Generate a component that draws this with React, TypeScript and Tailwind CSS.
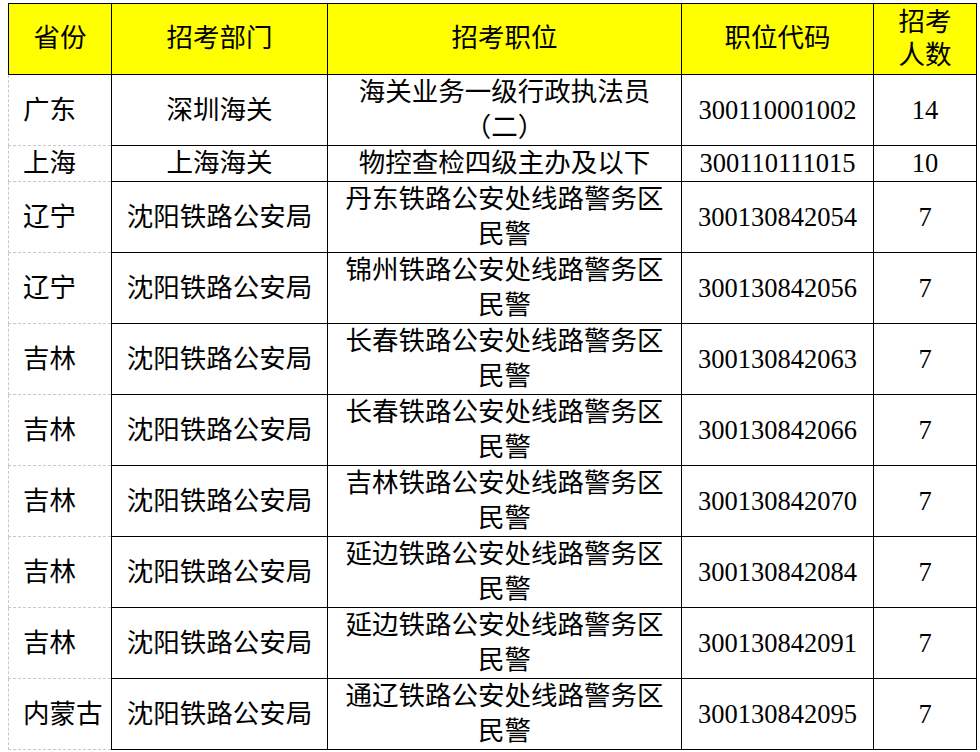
const rows = [
  { prov: '广东', dept: '深圳海关', pos: ['海关业务一级行政执法员', '（二）'], code: '300110001002', num: '14', h: 'h-[71px]' },
  { prov: '上海', dept: '上海海关', pos: ['物控查检四级主办及以下'], code: '300110111015', num: '10', h: 'h-[36px]' },
  { prov: '辽宁', dept: '沈阳铁路公安局', pos: ['丹东铁路公安处线路警务区', '民警'], code: '300130842054', num: '7', h: 'h-[71px]' },
  { prov: '辽宁', dept: '沈阳铁路公安局', pos: ['锦州铁路公安处线路警务区', '民警'], code: '300130842056', num: '7', h: 'h-[71px]' },
  { prov: '吉林', dept: '沈阳铁路公安局', pos: ['长春铁路公安处线路警务区', '民警'], code: '300130842063', num: '7', h: 'h-[71px]' },
  { prov: '吉林', dept: '沈阳铁路公安局', pos: ['长春铁路公安处线路警务区', '民警'], code: '300130842066', num: '7', h: 'h-[71px]' },
  { prov: '吉林', dept: '沈阳铁路公安局', pos: ['吉林铁路公安处线路警务区', '民警'], code: '300130842070', num: '7', h: 'h-[71px]' },
  { prov: '吉林', dept: '沈阳铁路公安局', pos: ['延边铁路公安处线路警务区', '民警'], code: '300130842084', num: '7', h: 'h-[71px]' },
  { prov: '吉林', dept: '沈阳铁路公安局', pos: ['延边铁路公安处线路警务区', '民警'], code: '300130842091', num: '7', h: 'h-[71px]' },
  { prov: '内蒙古', dept: '沈阳铁路公安局', pos: ['通辽铁路公安处线路警务区', '民警'], code: '300130842095', num: '7', h: 'h-[71px]' },
];

export default function App() {
  return (
    <div
      className="w-[980px] h-[752px] bg-white text-black text-[26.5px] overflow-hidden pt-[3px] pl-[8px]"
      style={{ fontFamily: '"Liberation Serif", "Noto Sans CJK SC", serif' }}
    >
      <table className="border-collapse table-fixed w-[968px]">
        <colgroup>
          <col className="w-[103px]" />
          <col className="w-[216px]" />
          <col className="w-[354px]" />
          <col className="w-[192px]" />
          <col className="w-[103px]" />
        </colgroup>
        <thead>
          {/* header row, yellow like the sheet */}
          <tr className="h-[71px] bg-[#ffff00]">
            <th className="border border-black font-normal text-center p-0">省份</th>
            <th className="border border-black font-normal text-center p-0">招考部门</th>
            <th className="border border-black font-normal text-center p-0">招考职位</th>
            <th className="border border-black font-normal text-center p-0">职位代码</th>
            <th className="border border-black font-normal text-center p-0 leading-[33px]">
              招考
              <br />
              人数
            </th>
          </tr>
        </thead>
        <tbody>
          {rows.map((r, i) => (
            <tr key={i} className={r.h}>
              <td className="border-l border-b border-dashed border-[#c8c8c8] text-left pl-[14px] p-0 align-middle leading-[35px]">
                {r.prov}
              </td>
              <td className="border border-black text-center p-0 align-middle leading-[35px]">{r.dept}</td>
              <td className="border border-black text-center p-0 align-middle leading-[35px] whitespace-nowrap">
                {r.pos.map((line, j) => (
                  <div key={j}>{line}</div>
                ))}
              </td>
              <td className="border border-black text-center p-0 align-middle leading-[35px]">{r.code}</td>
              <td className="border border-black text-center p-0 align-middle leading-[35px]">{r.num}</td>
            </tr>
          ))}
        </tbody>
      </table>
    </div>
  );
}
